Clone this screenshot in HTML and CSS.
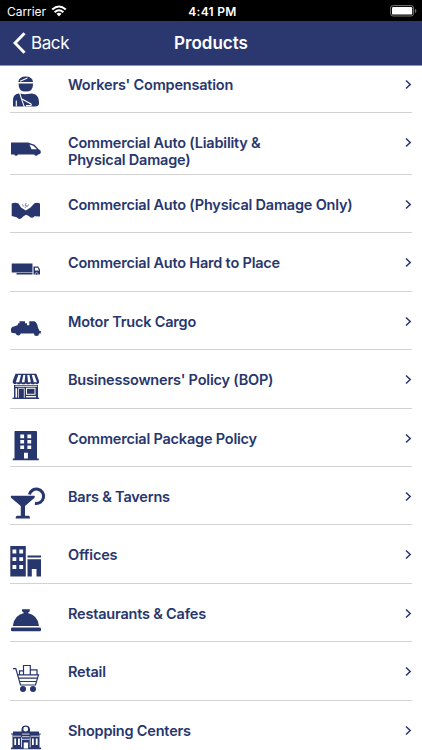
FILE: index.html
```html
<!DOCTYPE html>
<html lang="en">
<head>
<meta charset="utf-8">
<title>Products</title>
<link rel="stylesheet" href="styles.css">
</head>
<body>
<div class="status">
  <div class="carrier"><span>Carrier</span>
    <svg width="16" height="12" viewBox="0 0 16 12"><g fill="none" stroke="#fff" stroke-width="2"><path d="M1.2 4.5Q8 -1.6 14.8 4.5"/><path d="M3.6 7.2Q8 3.2 12.4 7.2"/></g><path d="M5.5 8.8Q8 6.8 10.5 8.8L8 11.4Z" fill="#fff"/></svg>
  </div>
  <div class="time">4:41 PM</div>
  <svg class="battery" width="27" height="12" viewBox="0 0 27 12"><rect x=".6" y=".6" width="23" height="10.4" rx="2.5" fill="none" stroke="#777"/><rect x="2" y="2" width="20.2" height="7.6" rx="1.2" fill="#fff"/><path d="M25 4v4q1.4-.5 1.4-2T25 4" fill="#777"/></svg>
</div>
<header class="nav">
  <div class="back"><svg width="13" height="22" viewBox="0 0 13 22"><path d="M11.5 1.2L2 11l9.5 9.8" fill="none" stroke="#fff" stroke-width="3"/></svg><span>Back</span></div>
  <h1>Products</h1>
</header>
<main class="list">
  <div class="row first">
    <svg class="icon" viewBox="8 54.4 40 58"><path d="M18.3 81.5Q19 76 25.7 76T33 81.5Z"/><path d="M18.6 82.8H33Q33.4 91 25.8 91T18.6 82.8Z"/><path class="cut" d="M20 80.6L27.5 77.4"/><path d="M13 106V99Q13.4 93 19 92.8L25 93.6L32 92.8Q38.8 93.5 39 101V103Q39 106 35 106Z"/><path class="cut" d="M19.6 92L21.4 98L24.4 106.5M16.3 100V106M22 98.4L31 103.4Q32 105 30 105H26"/></svg>
    <span class="label">Workers' Compensation</span><svg class="chev" viewBox="0 0 7 10"><path d="M1 1l4.2 4L1 9"/></svg></div>
  <div class="row tall">
    <svg class="icon" viewBox="8 112.8 40 58"><path d="M11 142.3H28L34.5 144.5L39 149.4Q41.2 150 40.8 152.5Q40.5 154.2 38 154.2A2 2 0 0 1 34.2 154.2H18A2 2 0 0 1 14.2 154.2H11Z"/><path class="white" d="M29.5 144.3L33.3 145.5L37 149H31.5Z"/></svg>
    <span class="label">Commercial Auto (Liability &amp;<br>Physical Damage)</span><svg class="chev" viewBox="0 0 7 10"><path d="M1 1l4.2 4L1 9"/></svg></div>
  <div class="row">
    <svg class="icon" viewBox="8 175 40 58"><path d="M11.7 203.4Q15 202.3 18.5 203.4L21 207.4L25.8 210.5L30.5 207.6L34.5 203.2Q37 202.3 40 203.4V216.4L34.5 216.2Q31.5 219.5 28.8 216L26 214.8L23.2 216.5Q20 221 16.6 217.2L11.7 216Z"/><path class="thin" d="M22.2 204.2l1.6 2.4M26.2 203l-1.2 2.2 1.8.6-2 2.2M28.6 204.4l-1.4 2.4"/></svg>
    <span class="label">Commercial Auto (Physical Damage Only)</span><svg class="chev" viewBox="0 0 7 10"><path d="M1 1l4.2 4L1 9"/></svg></div>
  <div class="row">
    <svg class="icon" viewBox="8 233.4 40 58"><path d="M11.7 263.8H32.5V273H11.7ZM16.5 273.3H32.5V274.8H16.5ZM33.5 267H38.2L40 270V275H33.5Z"/><path class="white" d="M35 268.2H37.7L39 271H35Z"/><circle class="ring" cx="36.5" cy="274.2" r="1.3"/></svg>
    <span class="label">Commercial Auto Hard to Place</span><svg class="chev" viewBox="0 0 7 10"><path d="M1 1l4.2 4L1 9"/></svg></div>
  <div class="row">
    <svg class="icon" viewBox="8 291.8 40 58"><path d="M11 331Q10.5 327.5 13 326.6L17.5 325L18.2 323H19.5V321H25V323H27V325H29.3V321H34.5Q37.3 322.3 38 327.5L39.6 330.7H40.8V333.4H39A2.5 2.5 0 0 1 34 333.4H20.8A2.6 2.6 0 0 1 15.8 333.4L11.5 332.5Z"/></svg>
    <span class="label">Motor Truck Cargo</span><svg class="chev" viewBox="0 0 7 10"><path d="M1 1l4.2 4L1 9"/></svg></div>
  <div class="row">
    <svg class="icon" viewBox="8 350.2 40 58"><path d="M15.5 374H36.3L39 381V383Q37.5 385.5 35 383.6Q33 385.5 30.5 383.6Q28 385.5 26 383.6Q23.5 385.5 21 383.6Q18.5 385.5 16.8 383.6Q14 385.5 12.8 383V381ZM14 385.2H38V399H14Z"/><path class="white" d="M18.3 375.2H21L19.2 382.5H15.8ZM23.3 375.2H25.3L24.5 382.5H21.8ZM27.3 375.2H29.5L30.8 382.5H28ZM31.8 375.2H34.3L37 382.5H33.8ZM15.3 386H37V387H15.3ZM15.5 388.5H17V398H15.5ZM26 388H35.5V395H26ZM26 396.3H36V397.6H26Z"/><path d="M27 389H34.5V394H27Z"/><path class="line" d="M12.5 398.5H39.2"/><path class="whiteline" d="M18.4 398V388.5H24.3V398"/></svg>
    <span class="label">Businessowners' Policy (BOP)</span><svg class="chev" viewBox="0 0 7 10"><path d="M1 1l4.2 4L1 9"/></svg></div>
  <div class="row">
    <svg class="icon" viewBox="8 408.6 40 58"><path d="M15 430.5H36Q37 430.5 37 431.5V458H38.8V459.8H12.8V458H14.5V431.5Q14.5 430.5 15 430.5Z"/><path class="white" d="M20.3 434.2h3.8v3.6h-3.8zM27.4 434.2h3.8v3.6h-3.8zM20.3 439.6h3.8v3.6h-3.8zM27.4 439.6h3.8v3.6h-3.8zM20.3 445h3.8v3.6h-3.8zM27.4 445h3.8v3.6h-3.8zM24 452.3h3.9v5.7H24z"/></svg>
    <span class="label">Commercial Package Policy</span><svg class="chev" viewBox="0 0 7 10"><path d="M1 1l4.2 4L1 9"/></svg></div>
  <div class="row">
    <svg class="icon" viewBox="8 467 40 58"><path d="M11 495.7H34.5Q35.2 497 34.3 498L25 506V515.7H28.8Q30 516 30 518.5H15.6Q15.7 516 17 515.7H20.8V506L11.3 498Q10.5 497 11 495.7Z"/><path class="thick" d="M29.4 494.5A7.2 7.2 0 1 1 35 503.3"/></svg>
    <span class="label">Bars &amp; Taverns</span><svg class="chev" viewBox="0 0 7 10"><path d="M1 1l4.2 4L1 9"/></svg></div>
  <div class="row">
    <svg class="icon" viewBox="8 525.4 40 58"><path d="M10.3 546.5H25.8V577H10.3ZM27.5 556H41V558H27.5ZM27.5 559.7H41V577H36.5V569.5H31.8V577H27.5Z"/><path class="white" d="M12.5 550h3.8v3.8h-3.8zM19.3 550h3.8v3.8h-3.8zM12.5 557.6h3.8v3.8h-3.8zM19.3 557.6h3.8v3.8h-3.8zM12.5 565.5h3.8v3.8h-3.8zM19.3 565.5h3.8v3.8h-3.8z"/></svg>
    <span class="label">Offices</span><svg class="chev" viewBox="0 0 7 10"><path d="M1 1l4.2 4L1 9"/></svg></div>
  <div class="row">
    <svg class="icon" viewBox="8 583.8 40 58"><path d="M22 609H29.8V611L27.8 612.8Q38 615 39 625.8H12.8Q14 615 24 612.8L22 611Z"/><rect x="11" y="627.3" width="30" height="3.8" rx="1.2"/></svg>
    <span class="label">Restaurants &amp; Cafes</span><svg class="chev" viewBox="0 0 7 10"><path d="M1 1l4.2 4L1 9"/></svg></div>
  <div class="row">
    <svg class="icon" viewBox="8 642.2 40 58"><path class="line" d="M13 668.8H15.8L20.5 685.2H35.5L38.5 675H17.5M19.5 674.5V671H23.5M23.5 674.5V665.7H30.3V674.5M30.3 670H37V674.5M18.5 678.3H37.5M19.5 681.7H36.5"/><circle cx="23" cy="689.3" r="3"/><circle cx="33" cy="689.3" r="3"/></svg>
    <span class="label">Retail</span><svg class="chev" viewBox="0 0 7 10"><path d="M1 1l4.2 4L1 9"/></svg></div>
  <div class="row">
    <svg class="icon" viewBox="8 700.6 40 58"><path d="M13 731H21.5V728.5Q22.2 725.2 25.7 725.2T30 728.5V731H39V733H40.8V734.2H39.5V747H41V748.8H11V747H12.5V734.2H11V733H13Z"/><path class="white" d="M23.3 728.8a2.4 2.4 0 0 1 4.8 0a2.4 2.4 0 0 1-4.8 0M14.3 738h1.8v6.5h-1.8zM18 738h1.8v6.5H18zM32 738h1.8v6.5H32zM35.8 738h1.8v6.5h-1.8zM23.7 742h4.4v6h-4.4z"/><path class="whiteline" d="M13 735.8h8M30.5 735.8H39M22 733.7h7.5M22 736.3h7.5M22 738.9h7.5M21.5 737v10M30.2 737v10"/></svg>
    <span class="label">Shopping Centers</span><svg class="chev" viewBox="0 0 7 10"><path d="M1 1l4.2 4L1 9"/></svg></div>
</main>
</body>
</html>
```
FILE: styles.css
```css
* { box-sizing: border-box; }
body { margin: 0; width: 422px; height: 750px; overflow: hidden; background: #fff; font-family: Inter, "Liberation Sans", sans-serif; color: #28366e; display: flex; flex-direction: column; }
.status { flex: none; height: 21px; background: #000; color: #fff; display: grid; grid-template-columns: 1fr auto 1fr; align-items: center; padding: 1px 5px 0 7px; font-size: 12px; }
.carrier { display: flex; align-items: center; gap: 5px; letter-spacing: -.05px; }
.time { font-weight: 600; letter-spacing: .3px; padding-left: 1px; }
.battery { justify-self: end; }
.nav { flex: none; height: 45px; background: #2a386f; border-bottom: 1px solid #8d93ad; color: #fff; display: grid; grid-template-columns: 1fr auto 1fr; align-items: center; padding: 0 13px; }
.back { display: flex; align-items: center; gap: 5px; font-size: 17px; letter-spacing: -.4px; }
h1 { margin: 0; font-size: 17px; font-weight: 600; letter-spacing: 0; }
.list { flex: 1; min-height: 0; overflow: hidden; padding: 0 10px 0 8px; }
.row { height: 58.4px; display: grid; grid-template-columns: 40px 1fr 7px; column-gap: 20px; align-items: start; background: linear-gradient(#d2d2d4, #d2d2d4) 2px 100% / 402px 1px no-repeat; }
.first { height: 46.8px; }
.first .icon, .first .label, .first .chev { margin-top: -11.4px; }
.tall { height: 62.2px; }
.icon { display: block; width: 40px; height: 58px; fill: #28366e; overflow: visible; }
.label { padding-top: 21px; font-size: 14.5px; line-height: 17px; font-weight: 600; letter-spacing: -.2px; }
.chev { width: 7px; height: 59px; fill: none; stroke: #28366e; stroke-width: 1.5; }
.white { fill: #fff; }
.cut { fill: none; stroke: #fff; stroke-width: 1.1; }
.whiteline { fill: none; stroke: #fff; stroke-width: .8; }
.line { fill: none; stroke: #28366e; stroke-width: 1.2; }
.thin { fill: none; stroke: #28366e; stroke-width: .6; }
.thick { fill: none; stroke: #28366e; stroke-width: 3; }
.ring { stroke: #fff; stroke-width: .5; }
```
